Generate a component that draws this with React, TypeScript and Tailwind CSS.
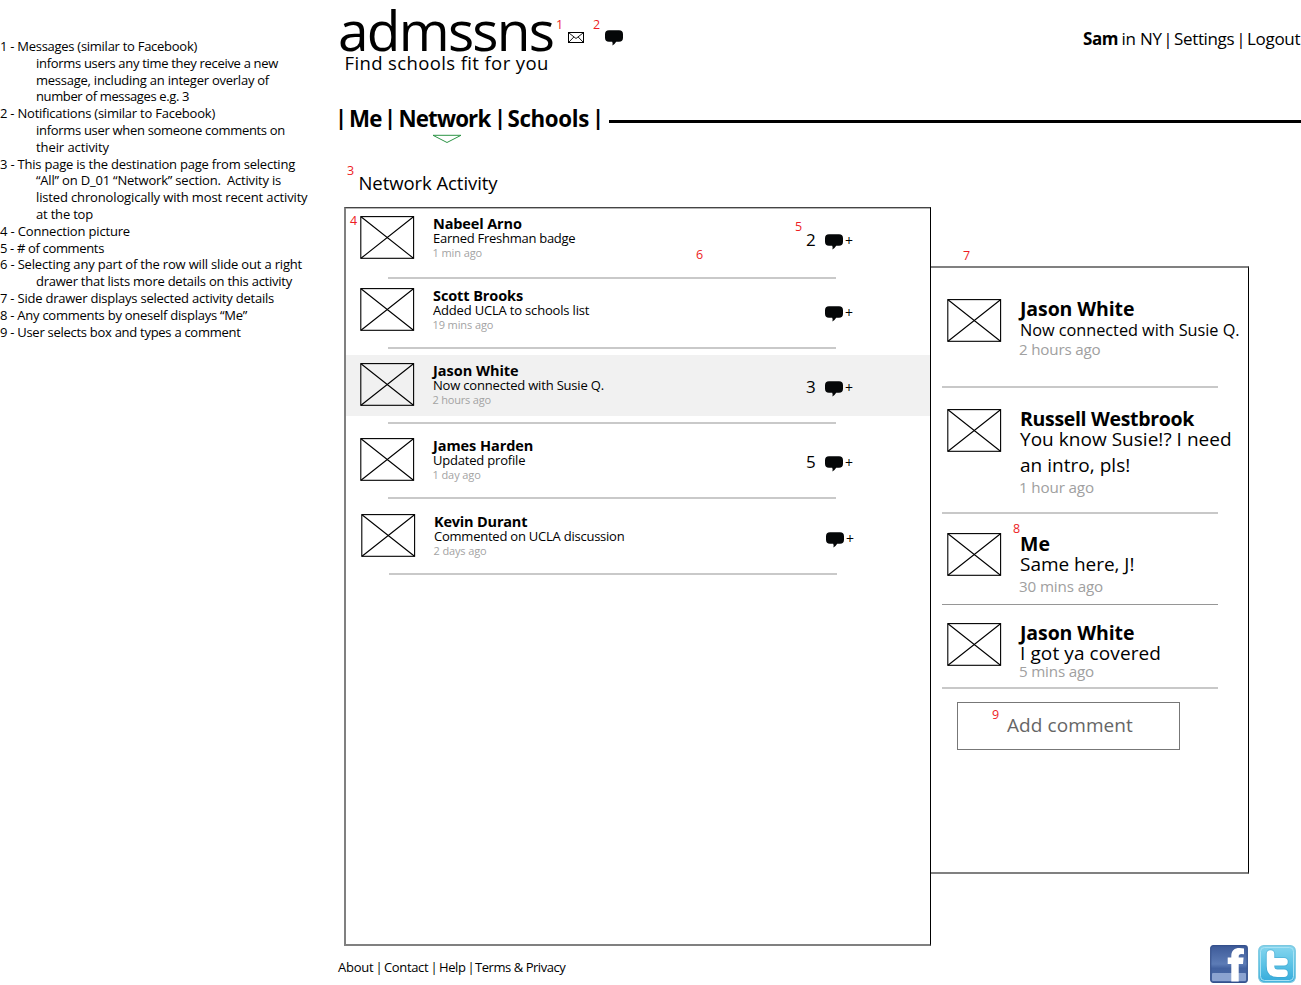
type Note = { text: string; className: string };

const notes: Note[] = [
  { text: '1 - Messages (similar to Facebook)', className: 'tracking-[-0.273px]' },
  { text: 'informs users any time they receive a new', className: 'ml-9 tracking-[-0.311px]' },
  { text: 'message, including an integer overlay of', className: 'ml-9 tracking-[-0.244px]' },
  { text: 'number of messages e.g. 3', className: 'ml-9 tracking-[-0.375px]' },
  { text: '2 - Notifications (similar to Facebook)', className: 'tracking-[-0.222px]' },
  { text: 'informs user when someone comments on', className: 'ml-9 tracking-[-0.309px]' },
  { text: 'their activity', className: 'ml-9 tracking-[-0.083px]' },
  { text: '3 - This page is the destination page from selecting', className: 'tracking-[-0.214px]' },
  { text: '“All” on D_01 “Network” section.  Activity is', className: 'ml-9 tracking-[-0.193px]' },
  { text: 'listed chronologically with most recent activity', className: 'ml-9 tracking-[-0.142px]' },
  { text: 'at the top', className: 'ml-9 tracking-[-0.193px]' },
  { text: '4 - Connection picture', className: 'tracking-[-0.164px]' },
  { text: '5 - # of comments', className: 'tracking-[-0.349px]' },
  { text: '6 - Selecting any part of the row will slide out a right', className: 'tracking-[-0.184px]' },
  { text: 'drawer that lists more details on this activity', className: 'ml-9 tracking-[-0.242px]' },
  { text: '7 - Side drawer displays selected activity details', className: 'tracking-[-0.221px]' },
  { text: '8 - Any comments by oneself displays “Me”', className: 'tracking-[-0.257px]' },
  { text: '9 - User selects box and types a comment', className: 'tracking-[-0.278px]' },
];

const activities = [
  {
    name: 'Nabeel Arno', text: 'Earned Freshman badge', time: '1 min ago', count: '2',
    row: 'h-[69px] pt-[8px] pl-[14px]', line: 'ml-[42px]',
    nameClass: 'tracking-[-0.12px]', textClass: 'tracking-[-0.266px]', timeClass: 'tracking-[-0.086px]',
  },
  {
    name: 'Scott Brooks', text: 'Added UCLA to schools list', time: '19 mins ago', count: '',
    row: 'h-[68px] pt-[9px] pl-[14px]', line: 'ml-[42px]',
    nameClass: 'tracking-[-0.1px]', textClass: 'tracking-[-0.181px]', timeClass: 'tracking-[-0.106px]',
  },
  {
    name: 'Jason White', text: 'Now connected with Susie Q.', time: '2 hours ago', count: '3',
    row: 'mt-[6px] mb-[6px] h-[61px] pt-[8px] pl-[14px] bg-[#f1f1f1]', line: 'ml-[42px]',
    nameClass: 'tracking-[-0.02px]', textClass: 'tracking-[-0.187px]', timeClass: 'tracking-[-0.191px]',
  },
  {
    name: 'James Harden', text: 'Updated profile', time: '1 day ago', count: '5',
    row: 'h-[73px] pt-[14px] pl-[14px]', line: 'ml-[42px]',
    nameClass: 'tracking-[-0.06px]', textClass: 'tracking-[-0.196px]', timeClass: 'tracking-[-0.087px]',
  },
  {
    name: 'Kevin Durant', text: 'Commented on UCLA discussion', time: '2 days ago', count: '',
    row: 'h-[74px] pt-[15px] pl-[15px]', line: 'ml-[43px]',
    nameClass: 'tracking-[-0.19px]', textClass: 'tracking-[-0.232px]', timeClass: 'tracking-[-0.13px]',
  },
];

const comments = [
  {
    name: 'Jason White', lines: ['Now connected with Susie Q.'], time: '2 hours ago',
    row: 'h-[118px] pt-[31px]', line: 'h-[2px] bg-[#c8c8c8]', column: '',
    nameClass: 'tracking-[-0.1px]', textClass: 'mt-[1px] text-[16.3px] leading-[20px] tracking-[-0.03px]',
    timeClass: '-mt-[0.6px] tracking-[-0.2px]',
  },
  {
    name: 'Russell Westbrook', lines: ['You know Susie!? I need', 'an intro, pls!'], time: '1 hour ago',
    row: 'h-[124px] pt-[21px]', line: 'h-[2px] bg-[#c8c8c8]', column: '',
    nameClass: 'tracking-[-0.33px]', textClass: '-mt-[2px] text-[19px] leading-[25.7px] tracking-[0.03px]',
    timeClass: '-mt-[1.6px] tracking-[-0.14px]',
  },
  {
    name: 'Me', lines: ['Same here, J!'], time: '30 mins ago',
    row: 'h-[90px] pt-[19px]', line: 'h-px bg-[#969696]', column: 'pt-px',
    nameClass: 'tracking-[0.1px]', textClass: 'text-[19px] leading-[20px] tracking-[-0.04px]',
    timeClass: 'mt-[1.6px] tracking-[-0.13px]',
  },
  {
    name: 'Jason White', lines: ['I got ya covered'], time: '5 mins ago',
    row: 'h-[82px] pt-[18px]', line: 'h-[2px] bg-[#c8c8c8]', column: '',
    nameClass: 'tracking-[-0.1px]', textClass: 'text-[19px] leading-[20px] tracking-[0.1px]',
    timeClass: '-mt-[2px] tracking-[-0.19px]',
  },
];

function Marker({ n, className }: { n: string; className: string }) {
  return (
    <span className={`absolute text-[12.5px] leading-[16px] text-[#ed1c24] ${className}`}>{n}</span>
  );
}

function Picture() {
  return (
    <svg width="55" height="43" viewBox="0 0 55 43" fill="none" stroke="#000" className="shrink-0">
      <rect x="0.8" y="0.6" width="52.8" height="41.7" strokeWidth="1.1" />
      <path d="M1 0.7 53.500 42.3M53.500 0.7 1 42.3" strokeWidth="1.1" />
    </svg>
  );
}

function Bubble() {
  return (
    <svg width="18" height="16" viewBox="0 0 18 16" fill="#050708" className="shrink-0">
      <path d="M4 0.2H14Q18 0.2 18 4.2V7.8Q18 11.8 14 11.8H11.2Q10 14 7.4 15.6Q8 13.6 7.2 11.8H4Q0 11.8 0 7.8V4.2Q0 0.2 4 0.2Z" />
    </svg>
  );
}

function FacebookIcon() {
  return (
    <svg width="38" height="38" viewBox="0 0 38 38">
      <defs>
        <linearGradient id="fb" x1="0" y1="0" x2="0" y2="1">
          <stop offset="0" stopColor="#3d5a98" />
          <stop offset="0.5" stopColor="#5d7cb6" />
          <stop offset="0.62" stopColor="#4362a0" />
          <stop offset="1" stopColor="#4b6aa6" />
        </linearGradient>
      </defs>
      <rect x="0.7" y="0.7" width="36.6" height="36.6" rx="2.5" fill="url(#fb)" stroke="#34508c" strokeWidth="1.2" />
      <rect x="2" y="28" width="34" height="8" rx="1" fill="#8ba3d0" />
      <path
        d="M21.300 36.500V19H17.700V12.500H21.300V11C21.300 5.300 24.500 2.900 29.500 2.900Q32 2.900 34 3.400V9.200Q32.800 8.900 31.500 8.900C29.400 8.900 28.700 9.800 28.700 11.500V12.500H33.600L33 19H28.700V36.500Z"
        fill="#fff"
      />
    </svg>
  );
}

function TwitterIcon() {
  return (
    <svg width="38" height="38" viewBox="0 0 38 38">
      <defs>
        <linearGradient id="tw" x1="0" y1="0" x2="0" y2="1">
          <stop offset="0" stopColor="#86d6ef" />
          <stop offset="0.5" stopColor="#5cc3e6" />
          <stop offset="1" stopColor="#35abdb" />
        </linearGradient>
      </defs>
      <rect x="0.7" y="0.7" width="36.6" height="36.6" rx="5" fill="url(#tw)" stroke="#7cc8e0" strokeWidth="1.2" />
      <rect x="2.500" y="2.500" width="33" height="33" rx="4" fill="none" stroke="#a9e2f4" strokeWidth="1" />
      <path
        d="M12.500 9V21Q12.500 28.300 19.500 28.300H26M12.500 16.800H26"
        fill="none"
        stroke="#3c9cc6"
        strokeWidth="9.500"
        strokeLinecap="round"
        strokeLinejoin="round"
        opacity="0.4"
      />
      <path
        d="M12.500 9V21Q12.500 28.300 19.500 28.300H26M12.500 16.800H26"
        fill="none"
        stroke="#fff"
        strokeWidth="7.500"
        strokeLinecap="round"
        strokeLinejoin="round"
      />
    </svg>
  );
}

function Bar() {
  return <span className="-mt-[4px] w-[12px] text-center text-[22px]">|</span>;
}

export default function App() {
  return (
    <div className="flex h-[985px] w-[1301px] overflow-hidden bg-white font-['Open_Sans','Noto_Sans',sans-serif] whitespace-pre text-black">
      <aside className="w-[338px] shrink-0 pt-[38.1px] text-[13px] leading-[16.8px]">
        {notes.map((n) => (
          <p key={n.text} className={n.className}>{n.text}</p>
        ))}
      </aside>

      <main className="relative w-[963px] shrink-0">
        <header className="flex h-[106px]">
          <div className="w-[230px] pt-[5px]">
            <h1 className="text-[55px] leading-[50px] tracking-[-1.75px]">admssns</h1>
            <p className="ml-[6.500px] text-[18.5px] leading-[16px] tracking-[0.38px]">Find schools fit for you</p>
          </div>
          <div className="flex items-start gap-[21px] pt-[30px]">
            <svg width="16" height="11" viewBox="0 0 16 11" fill="none" stroke="#000" className="mt-[2px]">
              <rect x="0.5" y="0.5" width="15" height="10" />
              <path d="M1 1 8 6.500 15 1M1 10 5.800 5M15 10 10.200 5" strokeWidth="0.9" />
            </svg>
            <Bubble />
          </div>
          <div className="ml-auto flex pt-[26.500px] text-[17px] leading-[24px]">
            <b className="w-[38.500px] tracking-[-0.4px]">Sam</b>
            <span className="w-[41.500px] tracking-[-0.25px]">in NY</span>
            <span className="w-[10px] text-center">|</span>
            <span className="w-[63px] pl-px tracking-[-0.35px]">Settings</span>
            <span className="w-[10px] text-center">|</span>
            <span className="w-[55px] pl-px tracking-[-0.3px]">Logout</span>
          </div>
        </header>

        <nav className="-ml-[3px] flex h-[24px] items-center text-[22.3px] leading-[24px] font-bold">
          <Bar />
          <span className="w-[37px] pt-px pl-[2px] tracking-[-0.8px]">Me</span>
          <Bar />
          <span className="w-[98px] pt-px pl-[2.500px] tracking-[-0.85px]">Network</span>
          <Bar />
          <span className="w-[86px] pt-px pl-[1.500px] tracking-[-0.35px]">Schools</span>
          <Bar />
          <span className="mt-[6px] ml-[5px] h-[3px] flex-1 bg-black" />
        </nav>
        <svg width="32" height="10" viewBox="0 0 32 10" className="mt-[4px] ml-[93px]">
          <path d="M2 1.300H30L16 8.500Z" fill="none" stroke="#2c9445" />
        </svg>

        <h2 className="mt-[29px] ml-[20.500px] text-[18.5px] leading-[20px] tracking-[-0.066px]">Network Activity</h2>

        <div className="mt-[14px] ml-[6px] flex">
          <section className="h-[739px] w-[587px] border-t border-r border-b-2 border-l-2 border-t-[#444] border-r-black border-b-[#808080] border-l-[#808080] shadow-[inset_0_1px_0_#b5b5b5]">
            {activities.map((a) => (
              <div key={a.name}>
                <div className={`flex ${a.row}`}>
                  <Picture />
                  <div className="ml-[18px] w-[373px] pt-[1px]">
                    <h3 className={`text-[14.5px] leading-[14px] font-bold ${a.nameClass}`}>{a.name}</h3>
                    <p className={`-mt-[0.5px] text-[13px] leading-[15px] ${a.textClass}`}>{a.text}</p>
                    <p className={`-ml-[0.500px] text-[11px] leading-[14px] text-[#a3a3a3] ${a.timeClass}`}>{a.time}</p>
                  </div>
                  <span className="mt-[13px] w-[19px] text-[17px] leading-[22px]">{a.count}</span>
                  <span className="mt-[18px] flex h-[16px]">
                    <Bubble />
                    <span className="ml-[2px] text-[14px] leading-[13px]">+</span>
                  </span>
                </div>
                <div className={`h-[2px] w-[448px] bg-[#c9c9c9] ${a.line}`} />
              </div>
            ))}
          </section>

          <section className="mt-[59px] h-[608px] w-[318px] border-t-2 border-r border-b-2 border-t-[#808080] border-r-black border-b-[#808080]">
            {comments.map((c, i) => (
              <div key={i} className="pl-[11px]">
                <div className={`flex pl-[5px] ${c.row}`}>
                  <Picture />
                  <div className={`ml-[18px] ${c.column}`}>
                    <h3 className={`text-[19.5px] leading-[20px] font-bold ${c.nameClass}`}>{c.name}</h3>
                    <div className={c.textClass}>
                      {c.lines.map((l) => (
                        <p key={l}>{l}</p>
                      ))}
                    </div>
                    <p className={`-ml-px text-[15.2px] leading-[20px] text-[#a0a0a0] ${c.timeClass}`}>{c.time}</p>
                  </div>
                </div>
                <div className={`w-[276px] ${c.line}`} />
              </div>
            ))}
            <div className="mt-[13px] ml-[26px] flex h-[48px] w-[223px] items-center border border-[#777] pb-[2px] pl-[49px] text-[19px] leading-[24px] tracking-[0.08px] text-[#666]">
              Add comment
            </div>
          </section>
        </div>

        <footer className="flex h-[39px] items-start justify-between">
          <p className="flex pt-[11px] text-[13px] leading-[20px]">
            <span className="w-[37px] tracking-[-0.25px]">About</span>
            <span className="w-[8px] text-center">|</span>
            <span className="w-[47px] pl-px tracking-[-0.35px]">Contact</span>
            <span className="w-[8px] text-center">|</span>
            <span className="w-[29px] pl-px tracking-[-0.4px]">Help</span>
            <span className="w-[8px] text-center">|</span>
            <span className="tracking-[-0.45px]">Terms &amp; Privacy</span>
          </p>
          <div className="-mt-px mr-[5px] flex gap-[10px]">
            <FacebookIcon />
            <TwitterIcon />
          </div>
        </footer>

        <Marker n="1" className="top-[17px] left-[218px]" />
        <Marker n="2" className="top-[17px] left-[255px]" />
        <Marker n="3" className="top-[163px] left-[9px]" />
        <Marker n="4" className="top-[213px] left-[12px]" />
        <Marker n="5" className="top-[219px] left-[457px]" />
        <Marker n="6" className="top-[247px] left-[358px]" />
        <Marker n="7" className="top-[248px] left-[625px]" />
        <Marker n="8" className="top-[521px] left-[675px]" />
        <Marker n="9" className="top-[707px] left-[654px]" />
      </main>
    </div>
  );
}
